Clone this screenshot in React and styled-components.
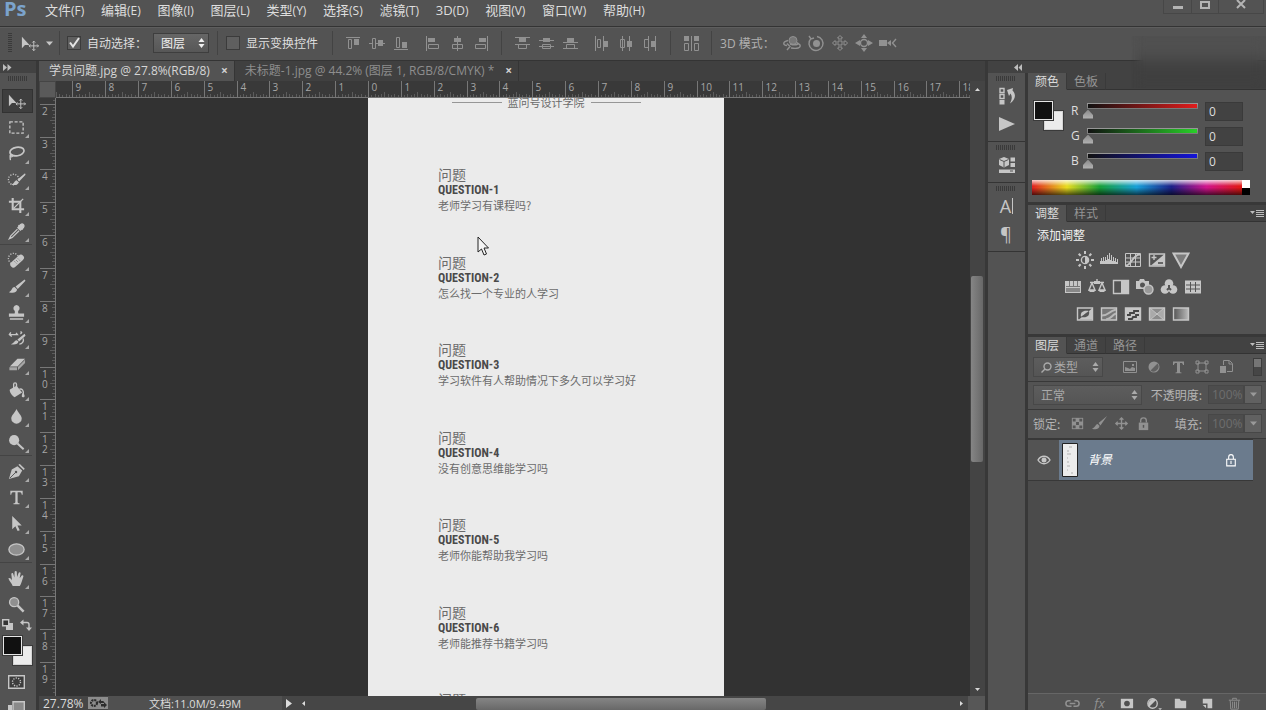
import { useState } from "react";
import styled, { createGlobalStyle, css } from "styled-components";

const colors = {
  panel: "#535353",
  dark: "#424242",
  darker: "#383838",
  line: "#343434",
  canvas: "#323232",
  icon: "#c6c6c6",
  dim: "#919191",
  text: "#dedede",
  page: "#ebebeb",
};

const fonts = {
  ui: `"Open Sans", "Noto Sans CJK SC", sans-serif`,
  cjk: `"Noto Sans CJK SC", sans-serif`,
  condensed: `"Roboto Condensed", "Liberation Sans Narrow", sans-serif`,
};

const GlobalStyle = createGlobalStyle`
  * {
    box-sizing: border-box;
  }
  body {
    margin: 0;
    background: ${colors.panel};
    color: ${colors.text};
    font-family: ${fonts.ui};
    font-size: 12px;
    overflow: hidden;
  }
  button, input, select {
    font: inherit;
    color: inherit;
    margin: 0;
    padding: 0;
    border: 0;
    border-radius: 0;
    background: none;
    outline: none;
  }
  svg {
    display: block;
    flex: none;
  }
`;

/* ---------- shell ---------- */

const Shell = styled.div`
  position: relative;
  display: flex;
  flex-direction: column;
  height: 100vh;
`;

const MenuBar = styled.header`
  display: flex;
  align-items: flex-start;
  height: 27px;
  border-bottom: 1px solid ${colors.line};
  background: ${colors.panel};
`;

const Logo = styled.span`
  width: 37px;
  padding-left: 4px;
  color: #7ba3cc;
  font-size: 20px;
  font-weight: 700;
  line-height: 18px;
`;

const Menus = styled.nav`
  display: flex;
  justify-content: space-between;
  width: 616px;
`;

const MenuButton = styled.button`
  padding: 0 8px;
  font-size: 13px;
  line-height: 20px;
  white-space: nowrap;

  small {
    font-size: 12px;
  }
`;

const WindowButtons = styled.div`
  display: flex;
  height: 14px;
  margin: 0 2px 0 auto;
  border: 1px solid #474747;
  border-top: 0;
`;

const WindowButton = styled.button`
  display: flex;
  justify-content: center;
  width: ${(props) => (props.$wide ? 45 : 27)}px;
  color: #b4b4b4;

  & + & {
    border-left: 1px solid #474747;
  }
`;

const OptionsBar = styled.div`
  display: flex;
  align-items: center;
  height: 34px;
  padding: 0 0 2px 8px;
  border-top: 1px solid #5e5e5e;
  border-bottom: 1px solid ${colors.line};
  background: ${colors.panel};
`;

const SideGrip = styled.span`
  width: 4px;
  height: 20px;
  background: repeating-linear-gradient(#3a3a3a 0 1px, transparent 1px 2px);
`;

const ToolPreset = styled.button`
  display: flex;
  align-items: center;
  gap: 7px;
  padding: 0 6px 0 8px;
  color: ${colors.icon};
`;

const Divider = styled.span`
  width: 1px;
  height: 24px;
  margin: 0 8px;
  background: #434343;
`;

const CheckLabel = styled.label`
  display: flex;
  align-items: center;
  gap: 6px;
  padding-right: 6px;
  font-family: ${fonts.cjk};
  line-height: 16px;
  white-space: nowrap;

  ${ToolPreset} + & {
    padding-left: 7px;
    border-left: 1px solid #434343;
    line-height: 24px;
  }
`;

const CheckBox = styled.input`
  appearance: none;
  width: 14px;
  height: 14px;
  border: 1px solid #3b3b3b;
  background: #5f5f5f;

  &:checked {
    background: #5f5f5f
      url("data:image/svg+xml,%3Csvg xmlns='http://www.w3.org/2000/svg' viewBox='0 0 12 12'%3E%3Cpath d='M2 5.5l3 4L11 1' fill='none' stroke='%23e4e4e4' stroke-width='2'/%3E%3C/svg%3E");
  }
`;

const SelectBox = styled.div`
  position: relative;
  width: ${(props) => props.$width}px;
  height: 20px;
  border: 1px solid #3e3e3e;
  background: linear-gradient(#666, #575757);
  color: ${(props) => (props.$dim ? "#aaa" : "#f0f0f0")};

  ${(props) =>
    props.$dim &&
    css`
      border-color: #484848;
      background: linear-gradient(#5d5d5d, #555);
    `}

  select {
    appearance: none;
    width: 100%;
    height: 18px;
    padding-left: ${(props) => props.$inset || 7}px;
    font-family: ${fonts.cjk};
    font-size: 12px;
    line-height: 18px;
  }

  svg {
    position: absolute;
    top: 4px;
    right: 3px;
    pointer-events: none;
  }

  svg + svg {
    left: 7px;
    right: auto;
  }
`;

const IconRow = styled.div`
  display: flex;
  align-items: center;
  margin-right: ${(props) => props.$after || 0}px;
`;

const IconButton = styled.button`
  display: flex;
  align-items: center;
  justify-content: center;
  width: ${(props) => props.$size || 24}px;
  height: ${(props) => props.$height || 20}px;
  color: ${(props) => (props.$dim ? colors.dim : colors.icon)};
`;

const ModeLabel = styled.span`
  width: 60px;
  color: #b0b0b0;
  white-space: nowrap;
`;

const Haze = styled.div`
  position: absolute;
  z-index: 5;
  top: 36px;
  right: 0;
  width: 135px;
  height: 52px;
  backdrop-filter: blur(7px);
  background: rgba(50, 50, 50, 0.08);
  mask-image: linear-gradient(90deg, transparent, #000 12px);
  pointer-events: none;
`;

const Workspace = styled.main`
  display: flex;
  flex: 1;
  min-height: 0;
`;

/* ---------- toolbar ---------- */

const Toolbar = styled.aside`
  display: flex;
  flex-direction: column;
  width: 39px;
  border-right: 3px solid ${colors.darker};
  background: ${colors.panel};
  overflow: hidden;
`;

const CollapseBar = styled.button`
  display: flex;
  flex: none;
  align-items: center;
  width: 100%;
  height: 12px;
  padding: 0 3px;
  background: ${colors.dark};
  color: #bdbdbd;
`;

const Grip = styled.span`
  flex: none;
  width: 20px;
  height: 5px;
  margin: 3px auto 1px 8px;
  background: repeating-linear-gradient(90deg, #3a3a3a 0 1px, transparent 1px 2px);
`;

const ToolStack = styled.div`
  flex: none;
  padding-top: 6px;
`;

const ToolGroup = styled.div`
  display: flex;
  flex-direction: column;
  gap: 2px;
  margin-right: 4px;
  padding: 1px 0;

  & + & {
    border-top: 1px solid #444;
    padding-top: 3px;
  }
`;

const Tool = styled.button`
  position: relative;
  display: flex;
  align-items: center;
  width: 31px;
  height: 24px;
  margin-left: 2px;
  padding-left: 4px;
  border: 1px solid ${(props) => (props.$active ? "#323232" : "transparent")};
  background: ${(props) => (props.$active ? "#3e3e3e" : "transparent")};
  color: ${colors.icon};

  &::after {
    content: "";
    display: ${(props) => (props.$plain ? "none" : "block")};
    position: absolute;
    right: 3px;
    bottom: 0;
    border: 2px solid transparent;
    border-right-color: #aaa;
    border-bottom-color: #aaa;
  }
`;

const SwatchShortcuts = styled.div`
  display: flex;
  flex: none;
  justify-content: space-between;
  width: 32px;
  height: 19px;
  padding: 2px 0 0 2px;
  color: ${colors.icon};
`;

const Swatches = styled.div`
  display: grid;
  flex: none;
  grid-template-columns: 10px 9px 10px;
  grid-template-rows: 10px 9px 10px;
  width: 29px;
  margin-left: ${(props) => props.$left || 0}px;
`;

const Swatch = styled.button`
  grid-area: ${(props) => (props.$front ? "1 / 1 / 3 / 3" : "2 / 2 / 4 / 4")};
  z-index: ${(props) => (props.$front ? 1 : 0)};
  border: 1px solid ${(props) => (props.$front ? "#e6e6e6" : "#d4d4d4")};
  outline: 1px solid #3a3a3a;
  background: ${(props) => (props.$front ? "#111" : "#ececec")};
`;

const ModeButton = styled.button`
  display: block;
  flex: none;
  height: 26px;
  padding: 8px 0 0 8px;
  color: ${colors.icon};
`;

/* ---------- document ---------- */

const DocumentArea = styled.section`
  display: flex;
  flex: 1;
  flex-direction: column;
  min-width: 0;
  border-right: 3px solid ${colors.darker};
  background: #404040;
`;

const DocumentTabs = styled.div`
  display: flex;
  flex: none;
  height: 20px;
`;

const DocumentTab = styled.div`
  display: flex;
  align-items: center;
  gap: 11px;
  padding: 0 6px 0 10px;
  border-right: 1px solid #353535;
  background: ${(props) => (props.$active ? colors.panel : "transparent")};
  color: ${(props) => (props.$active ? "#d6d6d6" : "#8e8e8e")};
  white-space: nowrap;

  button {
    line-height: 20px;
  }

  button:last-child {
    color: #d0d0d0;
    font-weight: 700;
  }
`;

const Viewport = styled.div`
  display: grid;
  flex: 1;
  grid-template-columns: 17px minmax(0, 1fr) 15px;
  grid-template-rows: 17px minmax(0, 1fr);
  min-height: 0;
`;

const RulerCorner = styled.div`
  border: 1px solid #454545;
  background: #5a5a5a;
`;

const RulerTrack = styled.div`
  overflow: hidden;
  background: #393939;
  border-${(props) => (props.$vertical ? "right" : "bottom")}: 1px solid #777;

  text {
    fill: #a6a6a6;
    font-family: ${fonts.ui};
    font-size: 10px;
  }

  line {
    stroke: #777;
  }

  line + line {
    stroke: #5c5c5c;
  }
`;

const ScrollColumn = styled.div`
  display: flex;
  grid-area: 1 / 3 / 3 / 4;
  flex-direction: column;
  align-items: center;
  background: #444;
  color: #d8d8d8;
`;

const ScrollArrow = styled.button`
  display: flex;
  flex: none;
  align-items: center;
  justify-content: center;
  width: 14px;
  height: ${(props) => props.$height || 14}px;
`;

const ScrollCorner = styled.span`
  width: 17px;
  height: 14px;
  background: #575757;
`;

const ScrollGap = styled.span`
  flex: ${(props) => props.$share};
`;

const ScrollThumb = styled.span`
  flex: ${(props) => props.$share};
  align-self: stretch;
  margin: ${(props) => (props.$vertical ? "0 2px 0 1px" : "2px 0 0")};
  border-radius: 2px;
  background: linear-gradient(${(props) => (props.$vertical ? "90deg" : "180deg")}, #858585, #686868);
`;

const Canvas = styled.div`
  position: relative;
  padding-left: 312px;
  background: ${colors.canvas};
  overflow: hidden;
`;

const Page = styled.article`
  width: 356px;
  height: 100%;
  background: ${colors.page};
  color: #6c6c6c;
  font-family: ${fonts.cjk};
  overflow: hidden;
`;

const School = styled.h1`
  display: flex;
  align-items: center;
  justify-content: center;
  gap: 6px;
  margin: -4px 0 57px;
  font-size: 11px;
  font-weight: 400;
  line-height: 16px;

  &::before,
  &::after {
    content: "";
    width: 50px;
    height: 1px;
    background: #969696;
  }
`;

const QuestionList = styled.ul`
  display: grid;
  grid-auto-rows: 1fr;
  height: 613px;
  margin: 0;
  padding: 0 0 0 70px;
  list-style: none;
`;

const Question = styled.li`
  white-space: nowrap;

  span {
    display: block;
    font-size: 14px;
    line-height: 15px;
  }

  strong {
    display: block;
    color: #4a4a4a;
    font-family: ${fonts.condensed};
    font-size: 12px;
    line-height: 16px;
  }

  p {
    margin: 0;
    font-size: 11px;
    line-height: 14px;
  }
`;

const Pointer = styled.svg`
  position: absolute;
  top: 138px;
  left: 421px;
`;

const StatusBar = styled.footer`
  display: flex;
  flex: none;
  align-items: center;
  height: 14px;
  background: #464646;
  color: #dcdcdc;
`;

const ZoomValue = styled.input`
  width: 49px;
  height: 14px;
  padding: 1px 0 0 4px;
`;

const ShareBadge = styled.button`
  display: flex;
  align-items: center;
  justify-content: center;
  width: 20px;
  height: 12px;
  background: #8c8c8c;
  color: #2c2c2c;
`;

const FileSize = styled.span`
  flex: none;
  width: 174px;
  height: 14px;
  padding: 1px 0 0 41px;
  background: #505050;
  font-size: 11px;
  line-height: 14px;
  white-space: nowrap;
`;

/* ---------- dock ---------- */

const Dock = styled.aside`
  display: flex;
  flex-direction: column;
  background: ${colors.darker};
`;

const CollapseHeader = styled(CollapseBar)`
  padding-left: 26px;
`;

const DockColumns = styled.div`
  display: flex;
  flex: 1;
  min-height: 0;
`;

const IconStrip = styled.div`
  display: flex;
  flex-direction: column;
  width: 40px;
  border-right: 3px solid ${colors.darker};
  background: ${colors.panel};
`;

const StripGroup = styled.div`
  display: flex;
  flex-direction: column;
  padding-bottom: 3px;
  border-bottom: 1px solid ${colors.line};
`;

const StripButton = styled(IconButton)`
  width: 37px;
  height: 28px;
`;

const StripLetter = styled.span`
  padding-right: 1px;
  border-right: ${(props) => (props.$caret ? 1 : 0)}px solid ${colors.icon};
  font-size: 18px;
  line-height: 16px;
`;

const Panels = styled.div`
  display: flex;
  flex-direction: column;
  gap: 3px;
  width: 238px;
`;

const Panel = styled.section`
  display: flex;
  flex: ${(props) => (props.$grow ? 1 : "none")};
  flex-direction: column;
  min-height: 0;
  background: ${colors.panel};
`;

const PanelTabs = styled.div`
  display: flex;
  flex: none;
  height: 17px;
  background: ${colors.dark};
`;

const PanelTab = styled.button`
  width: 39px;
  border-right: 1px solid #3a3a3a;
  border-bottom: 1px solid ${(props) => (props.$active ? colors.panel : "#333")};
  background: ${(props) => (props.$active ? colors.panel : "transparent")};
  color: ${(props) => (props.$active ? "#dcdcdc" : "#949494")};
  font-family: ${fonts.cjk};
  line-height: 16px;
  white-space: nowrap;
`;

const PanelMenu = styled.button`
  display: flex;
  flex: 1;
  align-items: center;
  justify-content: flex-end;
  padding-right: 2px;
  border-bottom: 1px solid #333;
  color: #bdbdbd;
`;

const ColorBody = styled.div`
  display: grid;
  grid-template-columns: 37px 1fr;
  height: 112px;
  padding: 11px 0 0 6px;
`;

const ChannelList = styled.div`
  display: flex;
  flex-direction: column;
  gap: 5px;
`;

const Channel = styled.label`
  display: grid;
  grid-template-columns: 11px 121px 38px;
  align-items: center;
  column-gap: 1px;
  height: 20px;
  line-height: 18px;
`;

const ChannelSlider = styled.input`
  appearance: none;
  width: 121px;
  height: 17px;
  background: linear-gradient(90deg, #111, ${(props) => props.$color}) 5px 1px / 109px 4px
      no-repeat,
    linear-gradient(#999, #777) 4px 0 / 111px 6px no-repeat;

  &::-webkit-slider-runnable-track {
    height: 17px;
  }

  &::-webkit-slider-thumb {
    appearance: none;
    width: 10px;
    height: 9px;
    margin-top: 7px;
    background: linear-gradient(#8a8a8a, #b4b4b4);
    clip-path: polygon(50% 0, 100% 60%, 100% 100%, 0 100%, 0 60%);
  }
`;

const ChannelValue = styled.input`
  width: 38px;
  height: 19px;
  padding-left: 3px;
  border: 1px solid #3a3a3a;
  background: #424242;
`;

const Spectrum = styled.div`
  display: flex;
  grid-column: 1 / 3;
  flex-direction: column;
  align-items: flex-end;
  width: 218px;
  height: 15px;
  margin: 2px 0 0 -2px;
  background: linear-gradient(
      rgba(255, 255, 255, 0.8),
      transparent 40%,
      transparent 50%,
      rgba(0, 0, 0, 0.65)
    ),
    linear-gradient(
      90deg,
      #e02020,
      #e8dc20 16%,
      #18a038 31%,
      #18a0d8 48%,
      #1c2088 64%,
      #d0148c 80%,
      #e01818 95%
    );
`;

const SpectrumEnd = styled.button`
  width: 8px;
  flex: 1;
  background: ${(props) => props.$color};
`;

const AdjustBody = styled.div`
  height: 112px;
  padding: 4px 0 0 9px;
`;

const AdjustTitle = styled.h2`
  margin: 0 0 2px;
  color: #f2f2f2;
  font-family: ${fonts.cjk};
  font-size: 12px;
  font-weight: 400;
  line-height: 18px;
`;

const AdjustRow = styled.div`
  display: flex;
  justify-content: center;
  width: 191px;
  height: 27px;
`;

const LayerRow = styled.div`
  display: flex;
  flex: none;
  align-items: center;
  height: ${(props) => props.$height}px;
  padding: 0 4px 2px 5px;
  border-bottom: 1px solid ${colors.darker};
  color: #b4b4b4;
  font-family: ${fonts.cjk};
  white-space: nowrap;
`;

const Gap = styled.span`
  width: ${(props) => props.$width}px;
`;

const Spacer = styled.span`
  flex: 1;
`;

const FilterSwitch = styled.button`
  width: 9px;
  height: 18px;
  margin-left: auto;
  border: 1px solid #3c3c3c;
  background: linear-gradient(#757575 50%, #464646 50%);
`;

const PercentField = styled.label`
  display: flex;
  align-items: center;
  gap: 6px;
`;

const PercentInput = styled.input`
  width: 36px;
  height: 19px;
  padding-left: 3px;
  border: 1px solid #474747;
  background: #4d4d4d;
  color: #6d6d6d;
  font-family: ${fonts.ui};
`;

const PercentButton = styled.button`
  display: flex;
  align-items: center;
  justify-content: center;
  width: 18px;
  height: 19px;
  border: 1px solid #474747;
  background: #616161;
  color: #999;
`;

const LayerList = styled.div`
  flex: 1;
  min-height: 0;
  padding-right: 13px;
  background: #4b4b4b;
`;

const Layer = styled.div`
  display: flex;
  align-items: center;
  height: 42px;
  border-top: 1px solid ${colors.darker};
  border-bottom: 1px solid ${colors.darker};
  background: ${colors.panel};
`;

const LayerBody = styled.div`
  display: flex;
  flex: 1;
  align-items: center;
  height: 40px;
  padding: 0 15px 0 3px;
  background: #6b7b8d;
  color: #fff;
  font-family: ${fonts.cjk};
  font-style: italic;
  line-height: 18px;
`;

const LayerName = styled.span`
  flex: 1;
  padding: 0 0 2px 10px;
`;

const PanelFooter = styled.div`
  display: flex;
  flex: none;
  align-items: center;
  height: 17px;
  padding: 2px 0 0 31px;
  border-top: 1px solid #666;
`;

const Effects = styled.em`
  font-size: 13px;
  line-height: 14px;
`;

/* ---------- drawings ---------- */

const Icon = ({ size = 20, height, children, view = "0 0 20 20" }) => (
  <svg width={size} height={height || size} viewBox={view} fill="none" stroke="none">
    {children}
  </svg>
);

const fill = { fill: "currentColor" };
const line = { stroke: "currentColor", strokeWidth: 1.4 };
const thin = { stroke: "currentColor", strokeWidth: 1 };

const moveShape = (
  <>
    <path d="M2 3v12l3.200-3.400H10z" {...fill} />
    <path d="M14.500 7.500v10M9.500 12.500h10M13 9l1.500-1.500L16 9M13 16l1.500 1.500L16 16M11 11l-1.500 1.500L11 14M18 11l1.500 1.500L18 14" {...thin} />
  </>
);

const toolIcons = {
  move: moveShape,
  marquee: <path d="M3 4h14v12H3z" {...line} strokeDasharray="3.200 1.800" />,
  lasso: (
    <>
      <ellipse cx="10.500" cy="8" rx="7.500" ry="4.500" transform="rotate(-10 10 8)" {...line} strokeWidth="1.800" />
      <path d="M5 11c-2 0-2.500 2.500-.5 2.500S6 10 4 12s0 3-.5 5" {...line} />
    </>
  ),
  quick: (
    <>
      <circle cx="7" cy="10" r="5.500" {...line} strokeDasharray="1.200 1.500" />
      <path d="M19 3.500L11 10l1.800 2.200L19.500 5zM10 10.800c-2 .2-2.500 3.800-5.500 4.800 4 .8 7.500 0 7.600-3z" {...fill} />
    </>
  ),
  crop: (
    <>
      <path d="M6 2v12h12M2 6h12v12" stroke="currentColor" strokeWidth="2.200" />
      <path d="M7 13L17 3" {...line} />
    </>
  ),
  eyedropper: (
    <>
      <path d="M12 3.500l4.500 4.500M17 2.500c1.500 1 1 3-1 4.500l-2 1.500L11.500 6 13 4c1.500-2 3-2.500 4-1.500z" {...fill} {...line} />
      <path d="M11 7.500L4 14.500l-1.500 3 3-1.200 7.200-7" {...line} />
    </>
  ),
  heal: (
    <>
      <circle cx="7" cy="8" r="5.500" {...line} strokeDasharray="1.200 1.500" />
      <rect x="2" y="7.500" width="17" height="6.500" rx="3.200" transform="rotate(-42 10.500 10.500)" {...fill} />
      <path d="M9.500 9.500l2 2M8 11l2 2M11.500 8l2 2" stroke="#666" strokeDasharray="1 1" />
    </>
  ),
  brush: (
    <path d="M18.500 2.500L9 10l2.300 2.500L19.500 4zM8 10.500c-3 0-2.500 4-6 5.500 4.500 1.200 8.800.5 8.500-3z" {...fill} />
  ),
  stamp: (
    <path d="M10 2a3.500 3.500 0 0 1 2 6.200c-.5.800-.3 2 0 2.800h6v3.500H2V11h6c.3-.8.500-2 0-2.800A3.500 3.500 0 0 1 10 2zM3 16h14v1.500H3z" {...fill} />
  ),
  history: (
    <>
      <path d="M18.500 5L11 11l1.800 2.200L19.500 7zM10 11.800c-2 .2-2.500 3.200-6 4.200 4 .8 8 0 8-3z" {...fill} />
      <path d="M3 6h8l-1.500-2M4 3.500L2.500 6 5 8M14 3c2 0 2 1.500 0 2M17 10c1 3-1 6-4 6" {...line} />
    </>
  ),
  eraser: (
    <>
      <path d="M11 4h8l-8 8H3z" {...fill} />
      <path d="M2.500 12.800h8V16h-8zM11.500 12.500L19 5v3.500L11.500 16z" fill="#a6a6a6" />
    </>
  ),
  bucket: (
    <>
      <path d="M3 9l7-4 6 7-8 5c-1.500 0-6-5.500-5-8z" {...fill} />
      <path d="M7 9V3.500c0-2 3-2 3 0V9M13 8.500c3-.5 5 1.500 4 6" {...line} />
      <path d="M17 12c-2 3-2 5 0 5s2-2 0-5z" {...fill} />
    </>
  ),
  blur: <path d="M10 2c1.500 4 5.500 6.500 5.500 10a5.500 5.500 0 0 1-11 0c0-3.500 4-6 5.500-10z" {...fill} />,
  dodge: (
    <>
      <circle cx="7.500" cy="7.500" r="5.300" {...fill} />
      <path d="M11 11l6.500 6" stroke="currentColor" strokeWidth="2.200" />
    </>
  ),
  pen: (
    <>
      <path d="M2 18l3-10 6-3.500L16 9l-3.500 6z" {...fill} />
      <path d="M12 3l5.500 5.500 1.200-1.500L13.500 2z" {...fill} />
      <path d="M3 17l6-6" stroke="#555" />
      <circle cx="9.500" cy="10.500" r="1.300" fill="#555" />
    </>
  ),
  type: (
    <path d="M3.500 3h13v4h-1c-.2-2-1-2.600-2.500-2.600h-1.800v10.300c0 1 .6 1.300 2 1.300v1H6.800v-1c1.400 0 2-.3 2-1.300V4.400H7C5.500 4.400 4.700 5 4.500 7h-1z" {...fill} />
  ),
  select: <path d="M5.500 2v14l3.300-3.200 2.400 5.200 2.200-1-2.400-5h4.500z" {...fill} />,
  ellipse: <ellipse cx="10" cy="10" rx="8" ry="6" fill="#8f8f8f" {...line} />,
  hand: (
    <path d="M6 18c-1-3-3.500-5-4.500-8 1-1 2.300-.2 3.800 2L4.500 5c.8-1.400 2-.8 2.200.4L7.800 9 8 3c.6-1.500 2.200-1.200 2.300.2l.3 5.300L12.300 4c1-1.200 2.200-.5 2 .8L13.300 9.800l2.200-3c1.200-.9 2.200.2 1.600 1.500-1.300 3.500-1.800 6.500-3.600 9.700z" {...fill} />
  ),
  zoom: (
    <>
      <circle cx="7.500" cy="7.500" r="4.800" fill="#909090" {...line} />
      <path d="M11 11l6.500 6.500" stroke="currentColor" strokeWidth="2.600" />
    </>
  ),
};

const toolGroups = [
  ["move", "marquee", "lasso", "quick", "crop", "eyedropper"],
  ["heal", "brush", "stamp", "history", "eraser", "bucket", "blur", "dodge"],
  ["pen", "type", "select", "ellipse"],
  ["hand", "zoom"],
];

const toolNames = {
  move: "移动工具",
  marquee: "矩形选框工具",
  lasso: "套索工具",
  quick: "快速选择工具",
  crop: "裁剪工具",
  eyedropper: "吸管工具",
  heal: "污点修复画笔工具",
  brush: "画笔工具",
  stamp: "仿制图章工具",
  history: "历史记录画笔工具",
  eraser: "橡皮擦工具",
  bucket: "油漆桶工具",
  blur: "模糊工具",
  dodge: "减淡工具",
  pen: "钢笔工具",
  type: "文字工具",
  select: "路径选择工具",
  ellipse: "椭圆工具",
  hand: "抓手工具",
  zoom: "缩放工具",
};

/* pairs of boxes against a guide line, one entry per button */
const alignGroups = [
  [
    <g key="top"><path d="M1 2.500h14M3.500 4.500h3v9h-3z" {...thin} /><path d="M9 4h5v6H9z" {...fill} /></g>,
    <g key="middle"><path d="M0 8.500h3M7 8.500h9M3.500 3.500h3v10h-3z" {...thin} /><path d="M9 5h5v6H9z" {...fill} /></g>,
    <g key="bottom"><path d="M1 14.500h14M3.500 2.500h3v10h-3z" {...thin} /><path d="M9 7h5v6H9z" {...fill} /></g>,
  ],
  [
    <g key="left"><path d="M1.500 1v15M3.500 9.500h10v4h-10z" {...thin} /><path d="M3 3h7v4H3z" {...fill} /></g>,
    <g key="center"><path d="M8.500 1v15M3.500 9.500h10v4h-10z" {...thin} /><path d="M5 3h7v4H5z" {...fill} /></g>,
    <g key="right"><path d="M14.500 1v15M2.500 9.500h10v4h-10z" {...thin} /><path d="M6 3h7v4H6z" {...fill} /></g>,
  ],
  [
    <g key="dt"><path d="M1 2.500h15M1 9.500h15M4.500 9.500h8v4h-8z" {...thin} /><path d="M5 3h7v4H5z" {...fill} /></g>,
    <g key="dm"><path d="M1 5.500h15M1 11.500h15M4.500 9.500h8v4h-8z" {...thin} /><path d="M5 3h7v4H5z" {...fill} /></g>,
    <g key="db"><path d="M1 7.500h15M1 13.500h15M4.500 9.500h8v4h-8z" {...thin} /><path d="M5 3h7v4H5z" {...fill} /></g>,
  ],
  [
    <g key="dl"><path d="M1.500 1v15M3.500 4.500h3v8h-3zM9.500 1v15" {...thin} /><path d="M10 6h4v6h-4z" {...fill} /></g>,
    <g key="dc"><path d="M4.500 1v15M2.500 4.500h4v8h-4zM11.500 1v15" {...thin} /><path d="M9 6h5v6H9z" {...fill} /></g>,
    <g key="dr"><path d="M6.500 1v15M2.500 4.500h4v8h-4zM13.500 1v15" {...thin} /><path d="M9 6h4v6H9z" {...fill} /></g>,
  ],
];

const modeIcons = [
  <g key="orbit"><circle cx="10" cy="6.500" r="4" fill="#777" {...thin} /><path d="M5 6.500C-1 8 0 11 4 11.500M4 9.500l3 3-3 3.500M8 14c6 1 10 0 9-3l-3-2.500M7 10c3 1 6 1 8 0" {...line} /></g>,
  <g key="roll"><circle cx="9.500" cy="9.500" r="3.500" {...fill} /><path d="M4 4.500a7 7 0 1 0 6-2M2 2l2 3 3-1" {...line} /></g>,
  <path key="pan" d="M9 1.500L6.500 4H8v4H4V6.500L1.500 9 4 11.500V10h4v4H6.500L9 16.500l2.500-2.500H10v-4h4v1.500L16.500 9 14 6.500V8h-4V4h1.500z" {...thin} />,
  <g key="slide"><circle cx="9" cy="9" r="3.500" {...line} /><path d="M9 0l3 4H6zM9 18l3-4H6zM0 9l5-3v6zM18 9l-5-3v6z" {...fill} /></g>,
  <g key="camera"><path d="M0 6h8v6H0zM8 9l4-3v6z" {...fill} /><path d="M17 5l-3.500 4 3.500 4" {...line} /></g>,
];

const adjustIcons = [
  [
    <g key="brightness"><circle cx="9" cy="9" r="3.600" {...line} /><path d="M9 5.500a3.500 3.500 0 0 1 0 7z" {...fill} /><path d="M9 0v3M9 15v3M0 9h3M15 9h3M2.700 2.700l2 2M13.300 13.300l2 2M2.700 15.300l2-2M13.300 4.700l2-2" {...line} strokeWidth="2" /></g>,
    <path key="levels" d="M0 13h18v-5h-1v3h-1V7h-1v3h-1V6h-1v4h-1V4h-1v5h-1V2H9v6H8V4H7v5H6V6H5v4H4V6H3v4H2V7H1v3H0z" {...fill} />,
    <g key="curves"><path d="M1.500 2.500h15v13h-15zM6.500 3v12M11.500 3v12M2 7h14M2 11h14" {...thin} /><path d="M2 14.500c6 0 6-11 14-11" {...line} strokeWidth="1.800" /></g>,
    <g key="exposure"><path d="M1.500 3h15v12h-15z" {...line} /><path d="M16 3.500v11H3z" {...fill} /><path d="M3.500 6.500h5M6 4v5" {...line} /><path d="M10 12h5" stroke="#444" strokeWidth="1.500" /></g>,
    <path key="vibrance" d="M1.500 2.500h15L9 16z" fill="#7c7c7c" stroke="currentColor" strokeWidth="2" />,
  ],
  [
    <g key="hue"><path d="M1 3h16v12H1z" {...fill} /><path d="M5.500 3v5M9.500 3v5M13.500 3v5M2 8.500h14" stroke="#777" /><path d="M2 10h14v4H2z" fill="#888" /></g>,
    <g key="balance"><path d="M9 1v4M2 4.500h14M4 5l-3 7h6zM14 5l-3 7h6z" {...line} /><path d="M6 3h6v3H6zM0 12h8l-2 2H2zM10 12h8l-2 2h-4z" {...fill} /></g>,
    <g key="bw"><path d="M1.500 2.500h15v13h-15z" {...line} /><path d="M9 3h7v12H9z" {...fill} /></g>,
    <g key="photo"><path d="M0 3h3l1-2h4l1 2h4v8H0z" {...fill} /><circle cx="6.500" cy="7" r="2.500" fill="#555" /><circle cx="12.500" cy="11.500" r="4.500" fill="#999" {...line} /></g>,
    <g key="mixer"><circle cx="9" cy="5.500" r="4.300" {...fill} /><circle cx="5" cy="11.500" r="4.300" {...fill} /><circle cx="13" cy="11.500" r="4.300" {...fill} /><path d="M9 10V7M9 10l-2 2M9 10l2 2" stroke="#555" strokeWidth="2" /></g>,
    <g key="lookup"><path d="M1 2.500h16v13H1z" {...fill} /><path d="M6.500 4v10M11.500 4v10M2 7h14M2 11h14" stroke="#555" /></g>,
  ],
  [
    <g key="invert"><path d="M1.500 3h15v12h-15z" {...line} /><path d="M16 3.500L3 14.500h13z" {...fill} /><path d="M5 12c-1-5 2-7 8-6z" {...fill} /><path d="M13 6c1 5-2 7-8 6z" fill="#555" /></g>,
    <g key="posterize"><path d="M1.500 3h15v12h-15z" fill="#777" {...line} /><path d="M2 10.500c7 0 6-4 14-6M6 14.500c6-1 5-4 10-6" stroke="#b8b8b8" strokeWidth="2" /></g>,
    <g key="threshold"><path d="M1.500 3h15v12h-15z" {...fill} {...line} /><path d="M3 10h3V8h4V6h5M4 14h4l1-2h3v-2h3" stroke="#444" strokeWidth="1.800" /></g>,
    <g key="selective"><path d="M2 3l7 6 7-6zM2 15l7-6 7 6z" fill="#8c8c8c" /><path d="M2 3l7 6-7 6zM16 3L9 9l7 6z" fill="#aaa" /><path d="M1.500 3h15v12h-15z" {...line} /><path d="M2 3l14 12M16 3L2 15" {...thin} /></g>,
    <g key="map"><defs><linearGradient id="map"><stop stopColor="#555" /><stop offset="1" stopColor="#bbb" /></linearGradient></defs><path d="M1.500 3h15v12h-15z" fill="url(#map)" {...line} /></g>,
  ],
];

const filterIcons = [
  <g key="pixel"><path d="M2.500 3.500h13v11h-13z" {...thin} /><path d="M4 13V9l3 1 2 1 2-2 3 1v3zM11 6h2v2h-2z" {...fill} /></g>,
  <g key="adjust"><circle cx="9" cy="9" r="5.500" {...fill} /><path d="M5.500 12.500l7-7a5 5 0 0 1-7 7z" fill="#606060" /></g>,
  <path key="type" d="M4 3.500h11V7h-1c-.2-1.500-.8-2-2-2h-1v8.500c0 .7.400 1 1.500 1v.8h-6v-.8c1.100 0 1.500-.3 1.500-1V5H7c-1.200 0-1.800.5-2 2H4z" {...fill} />,
  <path key="shape" d="M5 5h8v8H5zM3 3h3v3H3zM12 3h3v3h-3zM3 12h3v3H3zM12 12h3v3h-3z" {...thin} />,
  <g key="smart"><path d="M6.500 7V2.500h6l3 3v8H10M12 3v3h3" {...thin} /><path d="M3 8h6v7H3z" {...fill} /></g>,
];

const lockIcons = [
  <g key="alpha"><path d="M3 3h12v12H3z" {...fill} /><path d="M4 4h3v3H4zM11 4h3v3h-3zM7.500 7.500h3v3h-3zM4 11h3v3H4zM11 11h3v3h-3z" fill="#555" /></g>,
  <path key="pixels" d="M17 1L8 8.500l2 2.500zM7 9.500c-2 0-2.500 4-6 5 4 1.500 8 .5 8-3z" {...fill} />,
  <path key="position" d="M9 3v12M3 9h12M7 5l2-2 2 2M7 13l2 2 2-2M5 7L3 9l2 2M13 7l2 2-2 2" {...line} />,
  <g key="all">
    <path d="M4 8h10v8H4z" {...fill} />
    <path d="M6 8V6c0-4 6-4 6 0v2" {...line} />
    <path d="M9 10.500v3" stroke="#555" strokeWidth="1.500" />
  </g>,
];

const footerIcons = [
  { key: "link", dim: true, art: <path d="M7 6H5a3 3 0 0 0 0 6h3M11 6h2a3 3 0 0 1 0 6h-3M6 9h6" stroke="currentColor" strokeWidth="1.600" /> },
  { key: "fx", dim: true },
  { key: "mask", art: <g><path d="M3 4h13v10H3z" {...fill} /><circle cx="9.500" cy="9" r="3" fill="#505050" /></g> },
  { key: "adjust", art: <g><circle cx="8" cy="9" r="5" fill="#505050" {...line} /><path d="M11.500 5.500l-7 7A5 5 0 0 1 11.500 5.500z" {...fill} /><path d="M14 14h4l-2 2z" {...fill} /></g> },
  { key: "group", art: <path d="M3 4h5l1.500 2H15v8H3z" {...fill} /> },
  { key: "new", art: <g><path d="M4 4h10v10H9V9H4z" {...fill} /><path d="M4 10.500h3.500V14z" {...fill} /></g> },
  { key: "trash", dim: true, art: <path d="M3 5.500h12M7 5V3.500h4V5M4.500 6l.5 9h8l.5-9M7 7v7M9 7v7M11 7v7" {...thin} /> },
];

const Chevrons = ({ flip }) => (
  <Icon size={9} height={7} view="0 0 9 7">
    <path d={flip ? "M4 0v7L0 3.500zM8 0v7L4.500 3.500z" : "M0 0v7l4-3.500zM4.500 0v7L8.500 3.500z"} {...fill} />
  </Icon>
);

const UpDown = () => (
  <Icon size={7} height={10} view="0 0 7 10">
    <path d="M3.500 0L6.500 4h-6zM3.500 10L6.500 6h-6z" {...fill} />
  </Icon>
);

const Caret = ({ d = "M0 1.500h7L3.500 5.500z" }) => (
  <Icon size={7} view="0 0 7 7">
    <path d={d} {...fill} />
  </Icon>
);

/* ---------- rulers ---------- */

const UNIT = 32.85;

const RulerLabel = ({ vertical, at, digits }) => {
  if (at < 0) return null;
  if (!vertical) {
    return (
      <text x={at + 3} y="10">
        {digits}
      </text>
    );
  }
  return digits.split("").map((digit, i) => (
    <text key={i} x="3" y={at + 10 + i * 10}>
      {digit}
    </text>
  ));
};

const Ruler = ({ vertical, origin, from, to }) => {
  const marks = [];
  for (let n = from; n <= to; n++) {
    const at = Math.round(origin + n * UNIT) + 0.5;
    marks.push(
      <g key={n}>
        {vertical ? (
          <line x1="1" x2="16" y1={at} y2={at} />
        ) : (
          <line x1={at} x2={at} y1="0" y2="16" />
        )}
        {[1, 2, 3, 4, 5, 6, 7, 8, 9].map((i) => {
          const sub = Math.round(origin + (n + i / 10) * UNIT) + 0.5;
          const start = i === 5 ? 11 : i % 2 ? 14 : 13;
          return vertical ? (
            <line key={i} x1={start} x2="16" y1={sub} y2={sub} />
          ) : (
            <line key={i} x1={sub} x2={sub} y1={start} y2="16" />
          );
        })}
        <RulerLabel vertical={vertical} at={at} digits={String(Math.abs(n))} />
      </g>
    );
  }
  return (
    <RulerTrack $vertical={vertical}>
      <svg width="100%" height="100%">
        {marks}
      </svg>
    </RulerTrack>
  );
};

/* ---------- data ---------- */

const menus = [
  ["文件", "F"],
  ["编辑", "E"],
  ["图像", "I"],
  ["图层", "L"],
  ["类型", "Y"],
  ["选择", "S"],
  ["滤镜", "T"],
  ["3D", "D"],
  ["视图", "V"],
  ["窗口", "W"],
  ["帮助", "H"],
];

const questions = [
  "老师学习有课程吗?",
  "怎么找一个专业的人学习",
  "学习软件有人帮助情况下多久可以学习好",
  "没有创意思维能学习吗",
  "老师你能帮助我学习吗",
  "老师能推荐书籍学习吗",
  "",
];

const channels = [
  ["R", "#e01c1c"],
  ["G", "#28d028"],
  ["B", "#1414d8"],
];

/* ---------- parts ---------- */

const TopBar = () => (
  <MenuBar>
    <Logo>Ps</Logo>
    <Menus>
      {menus.map(([name, key]) => (
        <MenuButton key={key}>
          {name}
          <small>({key})</small>
        </MenuButton>
      ))}
    </Menus>
    <WindowButtons>
      <WindowButton aria-label="最小化">
        <Icon size={12} view="0 0 12 12"><path d="M1 6h10v3H1z" {...fill} /></Icon>
      </WindowButton>
      <WindowButton aria-label="最大化">
        <Icon size={12} view="0 0 12 12"><path d="M2 2h8v6H2z" stroke="currentColor" strokeWidth="2" /></Icon>
      </WindowButton>
      <WindowButton $wide aria-label="关闭">
        <Icon size={12} view="0 0 12 12"><path d="M2 0l8 8M10 0L2 8" stroke="currentColor" strokeWidth="2" /></Icon>
      </WindowButton>
    </WindowButtons>
  </MenuBar>
);

const Options = () => (
  <OptionsBar>
    <SideGrip />
    <ToolPreset aria-label="工具预设">
      <Icon size={19}>{moveShape}</Icon>
      <Caret />
    </ToolPreset>
    <CheckLabel>
      <CheckBox type="checkbox" defaultChecked />
      自动选择：
    </CheckLabel>
    <SelectBox $width={56}>
      <select aria-label="自动选择">
        <option>图层</option>
      </select>
      <UpDown />
    </SelectBox>
    <Divider />
    <CheckLabel>
      <CheckBox type="checkbox" />
      显示变换控件
    </CheckLabel>
    <Divider />
    {alignGroups.map((group, i) => (
      <IconRow key={i} $after={i % 2 ? 0 : 8}>
        {group.map((art) => (
          <IconButton key={art.key} $dim aria-label={`对齐 ${art.key}`}>
            <Icon size={17} view="0 0 17 17">{art}</Icon>
          </IconButton>
        ))}
        {i % 2 === 1 && <Divider />}
      </IconRow>
    ))}
    <IconButton $dim aria-label="自动对齐图层">
      <Icon size={17} view="0 0 17 17">
        <path d="M1 1h5v5H1zM11 1h5v5h-5z" {...fill} />
        <path d="M1.500 8.500h4v7h-4zM11.500 8.500h4v7h-4zM8.500 1v15" {...thin} />
      </Icon>
    </IconButton>
    <Divider />
    <ModeLabel>3D 模式：</ModeLabel>
    {modeIcons.map((art) => (
      <IconButton key={art.key} $dim aria-label={`3D ${art.key}`}>
        <Icon size={18} view="0 0 18 18">{art}</Icon>
      </IconButton>
    ))}
  </OptionsBar>
);

const ToolPalette = () => {
  const [active, setActive] = useState("move");
  return (
    <Toolbar>
      <CollapseBar aria-label="展开工具栏">
        <Chevrons />
      </CollapseBar>
      <Grip />
      <ToolStack>
        {toolGroups.map((group) => (
          <ToolGroup key={group[0]}>
            {group.map((name) => (
              <Tool
                key={name}
                $active={name === active}
                $plain={name === "zoom" || name === "move"}
                aria-label={toolNames[name]}
                onClick={() => setActive(name)}
              >
                <Icon size={19}>{toolIcons[name]}</Icon>
              </Tool>
            ))}
          </ToolGroup>
        ))}
      </ToolStack>
      <SwatchShortcuts>
        <Icon size={11} view="0 0 11 11">
          <path d="M4 4h7v7H4z" {...fill} />
          <path d="M.700.700h6v6h-6z" fill="#333" {...line} />
        </Icon>
        <Icon size={12} view="0 0 12 12">
          <path d="M2 3.500h5c1.500 0 2 .500 2 2V11" {...line} />
          <path d="M3.500.500v6L0 3.500zM6 8.500h6L9 12z" {...fill} />
        </Icon>
      </SwatchShortcuts>
      <Swatches $left={3}>
        <Swatch $front aria-label="前景色" />
        <Swatch aria-label="背景色" />
      </Swatches>
      <ModeButton aria-label="快速蒙版">
        <Icon size={17} height={14} view="0 0 17 14">
          <path d="M.700.700h15.600v12.600H.700z" fill="#3c3c3c" {...line} />
          <circle cx="8.500" cy="7" r="4" {...line} strokeDasharray="1.200 1.300" />
        </Icon>
      </ModeButton>
      <ModeButton aria-label="屏幕模式">
        <Icon size={17} height={14} view="0 0 17 14">
          <path d="M0 4h4v10H0z" {...fill} />
          <path d="M5 .700h11.300v9.300H5z" fill="#8a8a8a" {...line} />
        </Icon>
      </ModeButton>
    </Toolbar>
  );
};

const Document = () => (
  <DocumentArea>
    <DocumentTabs>
      <DocumentTab $active>
        <button>学员问题.jpg @ 27.8%(RGB/8)</button>
        <button aria-label="关闭 学员问题.jpg">×</button>
      </DocumentTab>
      <DocumentTab>
        <button>未标题-1.jpg @ 44.2% (图层 1, RGB/8/CMYK) *</button>
        <button aria-label="关闭 未标题-1.jpg">×</button>
      </DocumentTab>
    </DocumentTabs>
    <Viewport>
      <RulerCorner />
      <Ruler origin={312} from={-10} to={18} />
      <ScrollColumn>
        <ScrollArrow $height={17} aria-label="向上滚动">
          <Caret d="M1 5h5L3.500 2z" />
        </ScrollArrow>
        <ScrollGap $share={178} />
        <ScrollThumb $vertical $share={186} />
        <ScrollGap $share={220} />
        <ScrollArrow aria-label="向下滚动">
          <Caret d="M1 2h5L3.500 5z" />
        </ScrollArrow>
      </ScrollColumn>
      <Ruler vertical origin={-60} from={1} to={19} />
      <Canvas>
        <Page>
          <School>蓝问号设计学院</School>
          <QuestionList>
            {questions.map((text, i) => (
              <Question key={i}>
                <span>问题</span>
                {text && <strong>QUESTION-{i + 1}</strong>}
                {text && <p>{text}</p>}
              </Question>
            ))}
          </QuestionList>
        </Page>
        <Pointer width="13" height="20" viewBox="0 0 13 20">
          <path d="M1 1v15l3.500-3 2.500 6 2.500-1L7 12h4.500z" fill="#f4f4f4" stroke="#222" />
        </Pointer>
      </Canvas>
    </Viewport>
    <StatusBar>
      <ZoomValue aria-label="缩放比例" defaultValue="27.78%" />
      <ShareBadge aria-label="共享">
        <Icon size={18} height={10} view="0 0 18 10">
          <circle cx="5" cy="5" r="3" stroke="currentColor" strokeWidth="2.200" strokeDasharray="2 0.800" />
          <path d="M9 4l3-3v2h2c1 0 1 1 1 2h-3v1zM18 7l-3 3V8.500h-3V6h3V4z" {...fill} />
        </Icon>
      </ShareBadge>
      <FileSize>文档:11.0M/9.49M</FileSize>
      <ScrollArrow aria-label="状态菜单">
        <Icon size={9} view="0 0 9 9"><path d="M1 0v9l6-4.500z" {...fill} /></Icon>
      </ScrollArrow>
      <ScrollArrow aria-label="向左滚动">
        <Caret d="M5 1v5L2 3.500z" />
      </ScrollArrow>
      <ScrollGap $share={167} />
      <ScrollThumb $share={291} />
      <ScrollGap $share={189} />
      <ScrollArrow aria-label="向右滚动">
        <Caret d="M2 1v5l3-2.500z" />
      </ScrollArrow>
      <ScrollCorner />
    </StatusBar>
  </DocumentArea>
);

const Tabs = ({ names, menu = true }) => (
  <PanelTabs role="tablist">
    {names.map((name, i) => (
      <PanelTab key={name} role="tab" $active={i === 0} aria-selected={i === 0}>
        {name}
      </PanelTab>
    ))}
    <PanelMenu aria-label="面板菜单">
      {menu && (
        <Icon size={14} height={9} view="0 0 14 9">
          <path d="M0 2h5L2.500 5z" {...fill} />
          <path d="M6 1.500h8M6 3.500h8M6 5.500h8M6 7.500h8" {...thin} />
        </Icon>
      )}
    </PanelMenu>
  </PanelTabs>
);

const ColorPanel = () => (
  <Panel>
    <Tabs names={["颜色", "色板"]} menu={false} />
    <ColorBody>
      <Swatches>
        <Swatch $front aria-label="前景色" />
        <Swatch aria-label="背景色" />
      </Swatches>
      <ChannelList>
        {channels.map(([name, color]) => (
          <Channel key={name} htmlFor={`value-${name}`}>
            {name}
            <ChannelSlider type="range" min="0" max="255" defaultValue="0" $color={color} aria-label={name} />
            <ChannelValue id={`value-${name}`} defaultValue="0" />
          </Channel>
        ))}
      </ChannelList>
      <Spectrum>
        <SpectrumEnd $color="#fff" aria-label="白色" />
        <SpectrumEnd $color="#000" aria-label="黑色" />
      </Spectrum>
    </ColorBody>
  </Panel>
);

const AdjustPanel = () => (
  <Panel>
    <Tabs names={["调整", "样式"]} />
    <AdjustBody>
      <AdjustTitle>添加调整</AdjustTitle>
      {adjustIcons.map((row, i) => (
        <AdjustRow key={i}>
          {row.map((art) => (
            <IconButton key={art.key} $height={27} aria-label={art.key}>
              <Icon size={18} view="0 0 18 18">{art}</Icon>
            </IconButton>
          ))}
        </AdjustRow>
      ))}
    </AdjustBody>
  </Panel>
);

const Percent = ({ label }) => (
  <>
    <PercentField>
      {label}
      <PercentInput defaultValue="100%" />
    </PercentField>
    <PercentButton aria-label={`${label} 滑块`}>
      <Caret />
    </PercentButton>
  </>
);

const LayersPanel = () => (
  <Panel $grow>
    <Tabs names={["图层", "通道", "路径"]} />
    <LayerRow $height={28}>
      <SelectBox $width={70} $inset={20} $dim>
        <select aria-label="图层过滤">
          <option>类型</option>
        </select>
        <UpDown />
        <Icon size={11} view="0 0 11 11">
          <circle cx="6.500" cy="4.500" r="3.500" {...line} />
          <path d="M4 7l-3.500 3.500" {...line} />
        </Icon>
      </SelectBox>
      <Gap $width={15} />
      {filterIcons.map((art) => (
        <IconButton key={art.key} $dim aria-label={`过滤 ${art.key}`}>
          <Icon size={18} view="0 0 18 18">{art}</Icon>
        </IconButton>
      ))}
      <FilterSwitch aria-label="打开或关闭图层过滤" />
    </LayerRow>
    <LayerRow $height={28}>
      <SelectBox $width={109} $dim>
        <select aria-label="混合模式">
          <option>正常</option>
        </select>
        <UpDown />
      </SelectBox>
      <Spacer />
      <Percent label="不透明度:" />
    </LayerRow>
    <LayerRow $height={29}>
      锁定:
      <Gap $width={6} />
      {lockIcons.map((art) => (
        <IconButton key={art.key} $size={22} $dim aria-label={`锁定 ${art.key}`}>
          <Icon size={17} view="0 0 18 18">{art}</Icon>
        </IconButton>
      ))}
      <Spacer />
      <Percent label="填充:" />
    </LayerRow>
    <LayerList>
      <Layer>
        <IconButton $size={31} aria-label="指示图层可见性">
          <Icon size={14} height={10} view="0 0 14 10">
            <path d="M1 5c3-5 9-5 12 0-3 5-9 5-12 0z" {...line} />
            <circle cx="7" cy="5" r="2.500" {...fill} />
          </Icon>
        </IconButton>
        <LayerBody>
          <Icon size={16} height={34} view="0 0 16 34">
            <path d="M.5.5h15v33H.5z" fill="#ececec" stroke="#222" />
            <path d="M7 4h3M5 8h2M5 11h4M5 15h1M5 19h2M5 23h3M5 27h1M9 30h2" stroke="#b0b0b0" />
          </Icon>
          <LayerName>背景</LayerName>
          <Icon size={14} view="0 0 18 18">
            <path d="M3.500 8h11v8.500h-11zM6 8V5.500c0-4.500 6-4.500 6 0V8M9 10v4" {...line} />
          </Icon>
        </LayerBody>
      </Layer>
    </LayerList>
    <PanelFooter>
      {footerIcons.map(({ key, dim, art }) => (
        <IconButton key={key} $size={27} $height={15} $dim={dim} aria-label={key}>
          {art ? <Icon size={17} view="0 0 18 18">{art}</Icon> : <Effects>fx</Effects>}
        </IconButton>
      ))}
    </PanelFooter>
  </Panel>
);

const RightDock = () => (
  <Dock>
    <CollapseHeader aria-label="折叠面板">
      <Chevrons flip />
    </CollapseHeader>
    <DockColumns>
      <IconStrip>
        <StripGroup>
          <Grip />
          <StripButton aria-label="历史记录">
            <Icon size={18} view="0 0 18 18">
              <path d="M2 1.500h4v4H2zM2 7.500h4v4H2z" {...line} />
              <path d="M1.500 13h5v4.500h-5zM9 3l6-2-.5 2.500c4 4 3 9-2.500 13 2-4 2.500-7 .5-10L11 9z" {...fill} />
            </Icon>
          </StripButton>
          <StripButton aria-label="动作">
            <Icon size={18} view="0 0 18 18"><path d="M1 2l16 7-16 7z" {...fill} /></Icon>
          </StripButton>
        </StripGroup>
        <StripGroup>
          <Grip />
          <StripButton aria-label="属性">
            <Icon size={18} view="0 0 18 18">
              <path d="M6 1l5 2v6l-5 2.500L1 9V3zM12.500 1.500H17v4h-4.500zM12.500 7H17v4h-4.500zM1 13.500h16V17H1z" {...fill} />
              <path d="M1.500 3.500L6 5.500l4.500-2M6 5.500V11M12 15h3" stroke="#555" />
            </Icon>
          </StripButton>
        </StripGroup>
        <StripGroup>
          <Grip />
          <StripButton aria-label="字符">
            <StripLetter $caret>A</StripLetter>
          </StripButton>
          <StripButton aria-label="段落">
            <StripLetter>¶</StripLetter>
          </StripButton>
        </StripGroup>
      </IconStrip>
      <Panels>
        <ColorPanel />
        <AdjustPanel />
        <LayersPanel />
      </Panels>
    </DockColumns>
  </Dock>
);

const App = () => (
  <Shell>
    <GlobalStyle />
    <TopBar />
    <Options />
    <Haze />
    <Workspace>
      <ToolPalette />
      <Document />
      <RightDock />
    </Workspace>
  </Shell>
);

export default App;
